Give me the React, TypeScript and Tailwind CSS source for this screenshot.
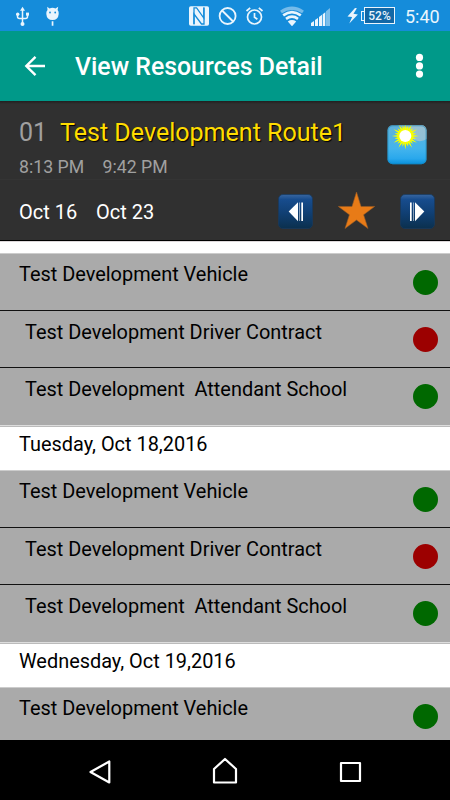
import React from "react";

type Tone = "green" | "red";
type Resource = { name: string; tone: Tone; indent?: boolean };

const DAY: Resource[] = [
  { name: "Test Development Vehicle", tone: "green" },
  { name: "Test Development Driver Contract", tone: "red", indent: true },
  { name: "Test Development  Attendant School", tone: "green", indent: true },
];

function StatusBar() {
  return (
    <div className="flex h-[31px] shrink-0 items-center bg-[#158cda] text-[#eaf5fd]">
      <svg className="ml-4 h-[20px] w-[14px] shrink-0" viewBox="0 0 14 20" fill="none" stroke="currentColor" strokeWidth="1.5">
        <path d="M6.5 3v14M1.5 7.5v3q0 2 2 2h6q2 0 2-2v-3" />
        <path d="M6.5 .8 9 4.8H4z" fill="currentColor" stroke="none" />
        <circle cx="6.5" cy="18" r="2" fill="currentColor" stroke="none" />
        <circle cx="1.7" cy="8.3" r="1.7" fill="currentColor" stroke="none" />
        <path d="M10 6.6h3v3h-3z" fill="currentColor" stroke="none" />
      </svg>
      <svg className="ml-4 h-[20px] w-[14px] shrink-0" viewBox="0 0 14 20">
        <path d="M1.2.8 3.5 2.5Q6.5 1.2 9.5 2.5L12.2.8 11.6 4Q13 5.5 12.7 8q-.5 6-6.2 6T.3 8Q0 5.5 1.5 4zM5.7 15.2h1.7v4.5H5.7z" fill="currentColor" />
        <circle cx="4" cy="6.5" r=".9" fill="#158cda" />
        <circle cx="9.2" cy="6.5" r=".9" fill="#158cda" />
      </svg>
      <svg className="ml-[129px] h-[20px] w-[20px] shrink-0" viewBox="0 0 20 20">
        <rect width="20" height="19.4" y=".3" rx="1.8" fill="currentColor" />
        <path d="M5 18.3V1.8h2.6L14.8 12V1.5" fill="none" stroke="#158cda" strokeWidth="1.3" />
        <path d="M5 18.3V8l7.5 10h2.5V1.5" fill="none" stroke="#158cda" strokeWidth="1.3" />
      </svg>
      <svg className="ml-[9px] h-[20px] w-[20px] shrink-0" viewBox="0 0 20 20" fill="none" stroke="currentColor" strokeWidth="1.8">
        <circle cx="9.6" cy="10" r="8" />
        <path d="m4.1 4.5 11 11" />
      </svg>
      <svg className="ml-[7px] h-[20px] w-[20px] shrink-0" viewBox="0 0 20 20" fill="none" stroke="currentColor" strokeWidth="1.7">
        <circle cx="9.5" cy="11" r="7" />
        <path d="M9.5 7v4.3l2.9 2M1.5 5 5.2 1.8M17.5 5l-3.7-3.2" />
      </svg>
      <svg className="ml-[15px] h-[20px] w-[25px] shrink-0" viewBox="0 0 25 20" fill="none" stroke="currentColor">
        <path d="M1 6Q12 -1.5 23 6" strokeWidth="3.3" opacity=".45" />
        <path d="M3.2 9.4Q12 2.8 20.8 9.4M6 12.9q6-4.4 12 0" strokeWidth="2.6" />
        <path d="M12 20.3 7.8 15.4q4.2-2.8 8.4 0z" fill="currentColor" stroke="none" />
      </svg>
      <svg className="ml-[6px] h-[20px] w-[20px] shrink-0" viewBox="0 0 20 20" fill="currentColor">
        <path d="M0 20v-3l3-2v5zM4 20v-6l3-2v8zM8 20V11l3-2.2V20z" />
        <path d="M11.7 20V8.3l2.6-2V20z" />
        <path d="M15 20V5.2L19 2v18z" opacity=".48" />
      </svg>
      <svg className="ml-[16px] h-[16px] w-[12px] shrink-0" viewBox="0 0 12 16" fill="currentColor">
        <path d="M8 0 .5 8.5l4.6.6L2.3 15.5l8.6-9-4.4-.7L9.9.3z" />
      </svg>
      <div className="ml-[2px] flex h-[18px] shrink-0 items-center">
        <div className="h-[10px] w-[3px] border border-r-0 border-current" />
        <div className="flex h-[17px] w-[31px] items-center justify-center border border-current bg-[#1268a6] text-[12px] font-medium">52%</div>
      </div>
      <div className="ml-[10px] whitespace-nowrap pt-[2px] text-[18px] leading-[30px]">5:40</div>
    </div>
  );
}

function AppBar() {
  return (
    <header className="flex h-[70px] shrink-0 items-center bg-[#009989] text-white">
      <svg className="ml-6 h-[22px] w-[22px] shrink-0" viewBox="0 0 22 22" fill="none" stroke="currentColor" strokeWidth="2.4">
        <path d="M21 11H3M11.5 1.8 2.3 11l9.2 9.2" />
      </svg>
      <h1 className="ml-[29px] grow whitespace-nowrap pt-[2px] text-[24.85px] font-medium leading-[30px]">View Resources Detail</h1>
      <svg className="mr-[26px] h-[26px] w-[9px] shrink-0" viewBox="0 0 9 26" fill="currentColor">
        <circle cx="4.5" cy="4.4" r="3.6" />
        <circle cx="4.5" cy="12.9" r="3.6" />
        <circle cx="4.5" cy="21.1" r="3.6" />
      </svg>
    </header>
  );
}

function SunTile() {
  const rays = Array.from({ length: 48 }, (_, i) => {
    const angle = (i * Math.PI) / 24;
    const radius = i % 2 ? 7.6 : i % 4 ? 11 : 13.5;
    return `${19.3 + Math.cos(angle) * radius},${12 + Math.sin(angle) * radius}`;
  }).join(" ");
  return (
    <svg className="h-[42px] w-[42px] shrink-0" viewBox="0 0 42 42">
      <defs>
        <linearGradient id="sky" x2="0" y2="1">
          <stop stopColor="#62b3db" />
          <stop offset=".6" stopColor="#43b4ed" />
          <stop offset=".85" stopColor="#2aa8ec" />
          <stop offset="1" stopColor="#078fdb" />
        </linearGradient>
        <clipPath id="tile"><rect x="1.5" y="1.3" width="39" height="39" rx="5" /></clipPath>
      </defs>
      <rect x="1.5" y="1.3" width="39" height="39" rx="5" fill="url(#sky)" />
      <g clipPath="url(#tile)">
        <path d="M8 0h34v14Q36 19 28 16Q23 4 8 0z" fill="#b5c7ce" opacity=".65" />
        <polygon points={rays} fill="#f6ff00" />
        <circle cx="19.3" cy="12" r="6" fill="#fff" />
      </g>
      <rect x="2" y="1.8" width="38" height="38" rx="5" fill="none" stroke="#1683b4" opacity=".5" />
    </svg>
  );
}

function StepButton({ forward = false }: { forward?: boolean }) {
  const id = forward ? "step-next" : "step-prev";
  return (
    <svg className="h-[35px] w-[35px] shrink-0" viewBox="0 0 35 35">
      <defs>
        <linearGradient id={id} x2="0" y2="1">
          <stop stopColor="#3866a0" />
          <stop offset=".15" stopColor="#174c8d" />
          <stop offset=".55" stopColor="#103f73" />
          <stop offset="1" stopColor="#0b304e" />
        </linearGradient>
      </defs>
      <rect x=".5" y=".5" width="34" height="34" rx="4.5" fill={`url(#${id})`} stroke="#17395f" strokeWidth=".7" />
      <g transform={forward ? "translate(35 0) scale(-1 1)" : undefined} fill="#fff">
        <path d="M10.7 17.5 20 8.3v19z" />
        <path d="M21 8.5h1v18.5h-1z" opacity=".5" />
        <path d="M23.3 8.5H25v18.5h-1.7z" />
      </g>
    </svg>
  );
}

function RoutePanel() {
  return (
    <section className="flex h-[139px] shrink-0 flex-col bg-[#303030] bg-linear-to-b from-[#202020] to-[#303030] to-[3px]">
      <div className="flex h-[79px] justify-between border-b border-[#343434] pl-[19px] pr-[22px]">
        <div className="pt-[16px]">
          <div className="flex whitespace-nowrap leading-[32px]">
            <span className="w-[41px] text-[25px] text-[#a0a0a0]">01</span>
            <span className="text-[25.05px] text-[#ffdc00] [text-shadow:1px_1px_1px_#000]">Test Development Route1</span>
          </div>
          <div className="mt-[7px] flex whitespace-nowrap text-[17.7px] leading-[22px] text-[#a0a0a0]">
            <span className="w-[83.5px]">8:13 PM</span>
            <span>9:42 PM</span>
          </div>
        </div>
        <div className="pt-[23px]"><SunTile /></div>
      </div>
      <div className="flex h-[60px] pl-[19px] text-white">
        <div className="flex w-[259px] pt-[19px] text-[20px] leading-[26px]">
          <span className="w-[77px]">Oct 16</span>
          <span>Oct 23</span>
        </div>
        <div className="flex pt-[14px]">
          <StepButton />
          <svg className="-mt-[3px] ml-[25px] mr-[25px] h-[39px] w-[37px]" viewBox="0 0 37 39">
            <path d="m18.5 1 4.5 14.5 13.7-.1L25.6 23.8 30 37.5 18.5 29 7 37.5l4.4-13.7L.3 15.4l13.7.1z" fill="#e87b17" stroke="#9b5c25" strokeWidth=".6" />
          </svg>
          <StepButton forward />
        </div>
      </div>
    </section>
  );
}

function ResourceRow({ item, divided }: { item: Resource; divided: boolean }) {
  return (
    <div className={`flex shrink-0 justify-between bg-[#aaa] pr-[12.5px] ${divided ? "h-[57px] border-b border-[#111]" : "h-[56.5px]"} ${item.indent ? "pl-[25px]" : "pl-[19px]"}`}>
      <span className={`whitespace-pre text-[19.92px] leading-[26px] ${item.indent ? "pt-[9px]" : "pt-[8px]"}`}>{item.name}</span>
      <span className={`size-[25px] rounded-full ${item.indent ? "mt-[16.3px]" : "mt-[15.5px]"} ${item.tone === "green" ? "bg-[#006800]" : "bg-[#9c0000]"}`} />
    </div>
  );
}

function DayGroup({ items }: { items: Resource[] }) {
  return (
    <div className="flex shrink-0 flex-col border-t border-[#ccc]">
      {items.map((item, i) => <ResourceRow key={item.name} item={item} divided={i < 2} />)}
      <div className="h-[2.5px] shrink-0 border-b border-[#bbb] bg-[#ddd]" />
    </div>
  );
}

function DateHeading({ children }: { children: React.ReactNode }) {
  return <h2 className="h-[43px] shrink-0 bg-white pl-[19px] pt-[5px] text-[19.92px] leading-[26px]">{children}</h2>;
}

export default function App() {
  return (
    <div className="flex h-[800px] w-[450px] flex-col overflow-hidden bg-white font-[Roboto,sans-serif] text-black">
      <StatusBar />
      <AppBar />
      <RoutePanel />
      <div className="h-[13px] shrink-0 border-t border-black bg-white"><div className="h-px bg-[#ddd8da]" /></div>
      <main className="flex h-[487px] shrink-0 flex-col overflow-hidden">
        <DayGroup items={DAY} />
        <DateHeading>Tuesday, Oct 18,2016</DateHeading>
        <DayGroup items={DAY} />
        <DateHeading>Wednesday, Oct 19,2016</DateHeading>
        <DayGroup items={DAY.slice(0, 1)} />
      </main>
      <nav className="flex h-[60px] shrink-0 items-center bg-black pl-[88px] text-white">
        <svg className="mt-[3px] h-[26px] w-[24px]" viewBox="0 0 24 26" fill="none" stroke="currentColor" strokeWidth="2.2" strokeLinejoin="round">
          <path d="M21.3 2.5v21L2.5 13z" />
        </svg>
        <svg className="ml-[100px] h-[28px] w-[26px]" viewBox="0 0 26 28" fill="none" stroke="currentColor" strokeWidth="2.2" strokeLinejoin="round">
          <path d="M2 13 13 3l11 10v13.5H2z" />
        </svg>
        <svg className="ml-[101px] mt-[3px] h-[24px] w-[24px]" viewBox="0 0 24 24" fill="none" stroke="currentColor" strokeWidth="2.2" strokeLinejoin="round">
          <path d="M2 3h19v18H2z" />
        </svg>
      </nav>
    </div>
  );
}
